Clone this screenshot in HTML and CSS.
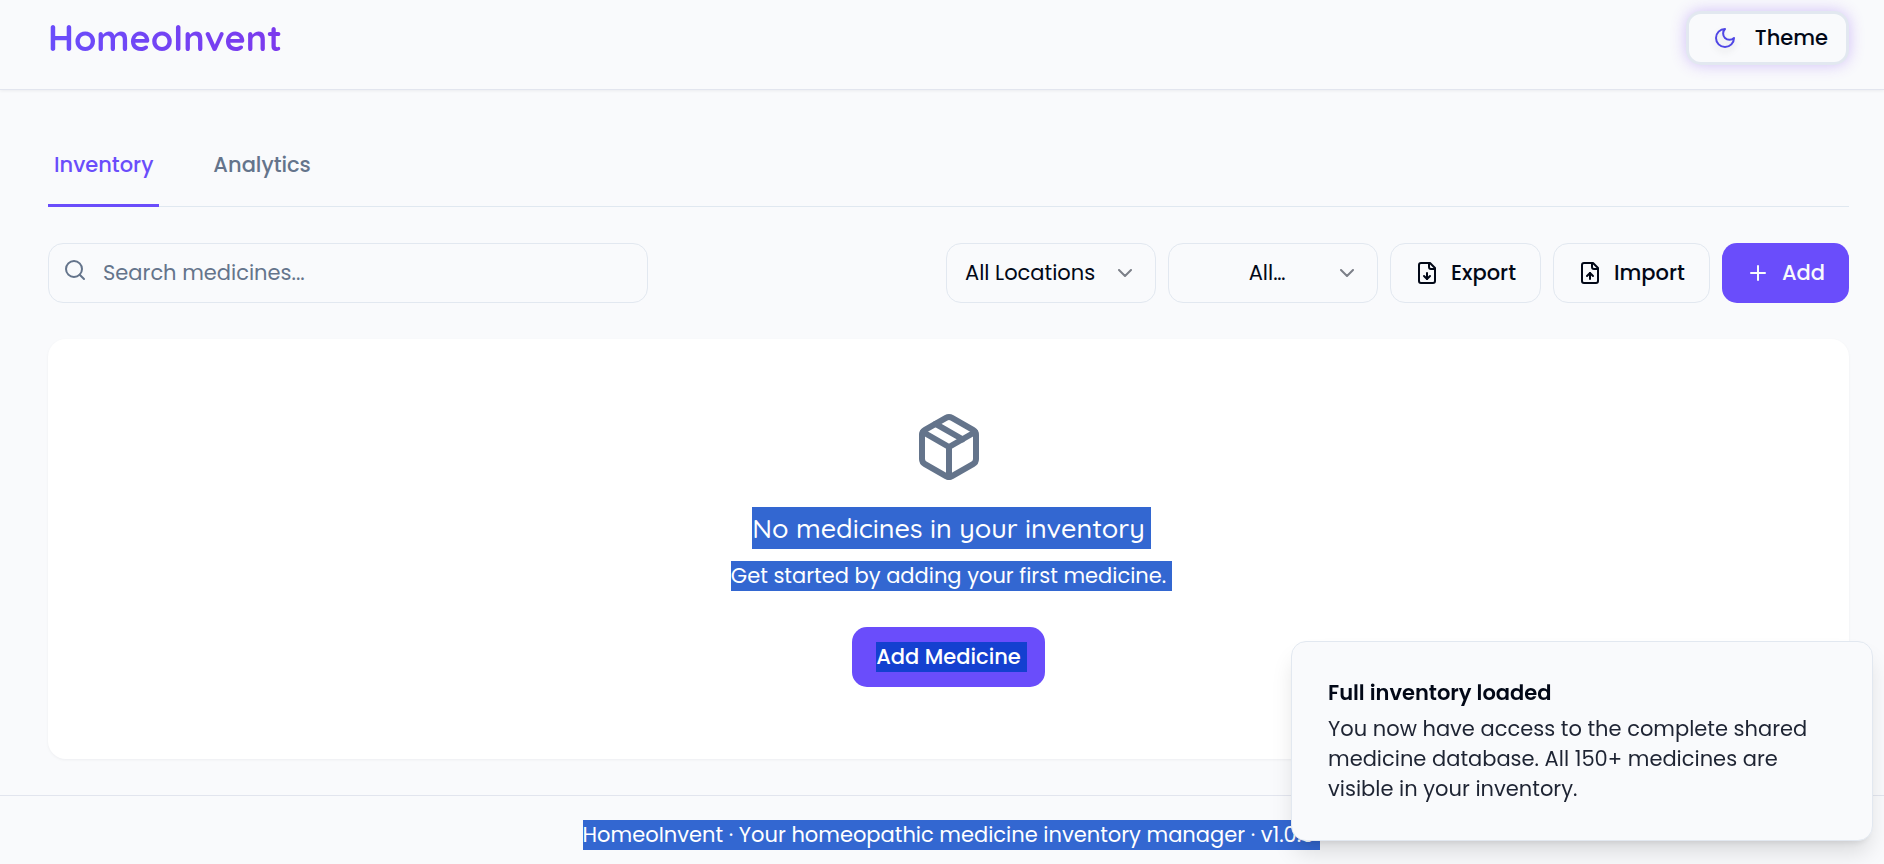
FILE: index.html
```html
<!DOCTYPE html>
<html lang="en">
<head>
<meta charset="utf-8">
<title>HomeoInvent</title>
<link rel="stylesheet" href="styles.css">
</head>
<body>
<header class="header">
  <h1 class="logo">HomeoInvent</h1>
  <button class="theme" type="button">
    <svg class="icon moon" viewBox="0 0 24 24"><path d="M12 3a6 6 0 0 0 9 9 9 9 0 1 1-9-9Z"/></svg>
    Theme
  </button>
</header>
<main class="main">
  <nav class="tabs">
    <button class="tab tab-active" type="button">Inventory</button>
    <button class="tab" type="button">Analytics</button>
  </nav>
  <div class="toolbar">
    <label class="search">
      <svg class="icon search-icon" viewBox="0 0 24 24"><circle cx="11" cy="11" r="8"/><path d="m21 21-4.3-4.3"/></svg>
      <input class="search-input" type="text" placeholder="Search medicines..." aria-label="Search medicines">
    </label>
    <div class="actions">
      <div class="select">
        <select class="select-box" aria-label="Location"><option>All Locations</option></select>
        <svg class="icon chevron" viewBox="0 0 24 24"><path d="m6 9 6 6 6-6"/></svg>
      </div>
      <div class="select">
        <select class="select-box select-center" aria-label="Category"><option>All…</option></select>
        <svg class="icon chevron" viewBox="0 0 24 24"><path d="m6 9 6 6 6-6"/></svg>
      </div>
      <button class="button outline" type="button">
        <svg class="icon" viewBox="0 0 24 24"><path d="M15 2H6a2 2 0 0 0-2 2v16a2 2 0 0 0 2 2h12a2 2 0 0 0 2-2V7Z"/><path d="M14 2v4a2 2 0 0 0 2 2h4"/><path d="M12 18v-6"/><path d="m9 15 3 3 3-3"/></svg>
        Export
      </button>
      <button class="button outline" type="button">
        <svg class="icon" viewBox="0 0 24 24"><path d="M15 2H6a2 2 0 0 0-2 2v16a2 2 0 0 0 2 2h12a2 2 0 0 0 2-2V7Z"/><path d="M14 2v4a2 2 0 0 0 2 2h4"/><path d="M12 12v6"/><path d="m15 15-3-3-3 3"/></svg>
        Import
      </button>
      <button class="button primary" type="button">
        <svg class="icon" viewBox="0 0 24 24"><path d="M5 12h14"/><path d="M12 5v14"/></svg>
        Add
      </button>
    </div>
  </div>
  <section class="card">
    <svg class="icon package" viewBox="0 0 24 24"><path d="m7.5 4.27 9 5.15"/><path d="M21 8a2 2 0 0 0-1-1.73l-7-4a2 2 0 0 0-2 0l-7 4A2 2 0 0 0 3 8v8a2 2 0 0 0 1 1.73l7 4a2 2 0 0 0 2 0l7-4A2 2 0 0 0 21 16Z"/><path d="m3.3 7 8.7 5 8.7-5"/><path d="M12 22V12"/></svg>
    <h2 class="empty-title"><span class="marked">No medicines in your inventory</span></h2>
    <p class="empty-text"><span class="marked">Get started by adding your first medicine.</span></p>
    <button class="button primary" type="button"><span class="marked marked-deep">Add Medicine</span></button>
  </section>
</main>
<footer class="footer"><span class="marked">HomeoInvent · Your homeopathic medicine inventory manager · v1.0.0</span></footer>
<div class="toast" role="status">
  <strong class="toast-title">Full inventory loaded</strong>
  <p class="toast-text">You now have access to the complete shared medicine database. All 150+ medicines are visible in your inventory.</p>
</div>
</body>
</html>
```
FILE: styles.css
```css
* { box-sizing: border-box; }

body {
  margin: 0;
  overflow: hidden;
  background: #f9fafc;
  color: #020817;
  font: 400 21px/30px Poppins, Inter, sans-serif;
}

h1, h2, p { margin: 0; }
button, input, select { font: inherit; color: inherit; }

.icon {
  width: 24px;
  height: 24px;
  flex: none;
  fill: none;
  stroke: currentColor;
  stroke-width: 2;
  stroke-linecap: round;
  stroke-linejoin: round;
}

.header {
  display: flex;
  align-items: flex-start;
  justify-content: space-between;
  height: 90px;
  padding: 11px 35px 0 48px;
  border-bottom: 1px solid #e2e5ee;
  box-shadow: 0 1px 3px rgba(15, 23, 42, 0.06);
}

.logo {
  padding-top: 6px;
  font: 700 36px/42px Quicksand, Inter, sans-serif;
  background: linear-gradient(to right, #6a4dfb, #7c3aed);
  background-clip: text;
  color: transparent;
}

.theme {
  display: flex;
  align-items: center;
  gap: 18px;
  height: 54px;
  padding: 0 18px 0 24px;
  border: 3px solid #e2e8f0;
  border-radius: 15px;
  background: #f9fafc;
  box-shadow: 0 0 15px rgba(124, 58, 237, 0.3);
  font-weight: 500;
}

.moon {
  color: #4f46e5;
  filter: drop-shadow(0 4px 3px rgba(0, 0, 0, 0.1));
}

.main { padding: 36px 35px 36px 48px; }

.tabs {
  display: flex;
  gap: 48px;
  border-bottom: 1px solid #e0e8f0;
}

.tab {
  margin-bottom: -1px;
  padding: 24px 6px;
  border: 0;
  border-bottom: 3px solid transparent;
  background: none;
  color: #64748b;
  font-weight: 500;
}

.tab-active {
  border-color: #6a4dfb;
  color: #6a4dfb;
}

.toolbar {
  display: flex;
  justify-content: space-between;
  gap: 24px;
  margin: 36px 0;
}

.search {
  position: relative;
  flex: 0 1 600px;
}

.search-icon {
  position: absolute;
  top: 15px;
  left: 15px;
  color: #64748b;
}

.search-input {
  width: 100%;
  height: 60px;
  padding: 0 18px 2px 54px;
  border: 1px solid #e2e8f0;
  border-radius: 15px;
  background: #f9fafc;
}

.search-input::placeholder { color: #64748b; }

.actions {
  display: flex;
  gap: 12px;
}

.select {
  position: relative;
  width: 210px;
}

.select-box {
  width: 100%;
  height: 60px;
  padding: 0 42px 0 18px;
  border: 1px solid #e2e8f0;
  border-radius: 15px;
  background: #f9fafc;
  appearance: none;
}

.select-center {
  padding: 0 30px 0 18px;
  text-align-last: center;
}

.chevron {
  position: absolute;
  top: 18px;
  right: 19px;
  opacity: 0.5;
  pointer-events: none;
}

.button {
  display: flex;
  align-items: center;
  justify-content: center;
  gap: 12px;
  height: 60px;
  padding: 0 24px;
  border: 0;
  border-radius: 15px;
  font-weight: 500;
}

.outline {
  border: 1px solid #e2e8f0;
  background: #f9fafc;
}

.primary {
  background: #6a4dfb;
  color: #f8fafc;
}

.card {
  display: flex;
  flex-direction: column;
  align-items: center;
  padding: 72px;
  border-radius: 18px;
  background: #fff;
  box-shadow: 0 1px 3px rgba(15, 23, 42, 0.05);
}

.package {
  width: 72px;
  height: 72px;
  margin-bottom: 24px;
  color: #64748b;
}

.marked {
  display: inline-block;
  margin-right: -6px;
  padding-right: 6px;
  background: #3367d1;
  color: #fff;
}

.marked-deep { background: #1440d0; }

.empty-title {
  margin-bottom: 12px;
  font: 500 27px/42px Quicksand, Inter, sans-serif;
}

.empty-text { margin-bottom: 36px; }

.empty-title .marked,
.empty-text .marked,
.button .marked { vertical-align: top; }

.footer {
  padding: 24px 35px 24px 48px;
  border-top: 1px solid #e2e5ee;
  text-align: center;
}

.toast {
  position: fixed;
  right: 11px;
  bottom: 23px;
  width: 582px;
  padding: 36px;
  border: 1px solid #e2e8f0;
  border-radius: 15px;
  background: #f9fafc;
  box-shadow: 0 15px 23px -4px rgba(0, 0, 0, 0.13), 0 6px 9px -6px rgba(0, 0, 0, 0.13);
}

.toast-title {
  display: block;
  margin-bottom: 6px;
  font-weight: 600;
}

.toast-text { color: #1e2433; }
```
